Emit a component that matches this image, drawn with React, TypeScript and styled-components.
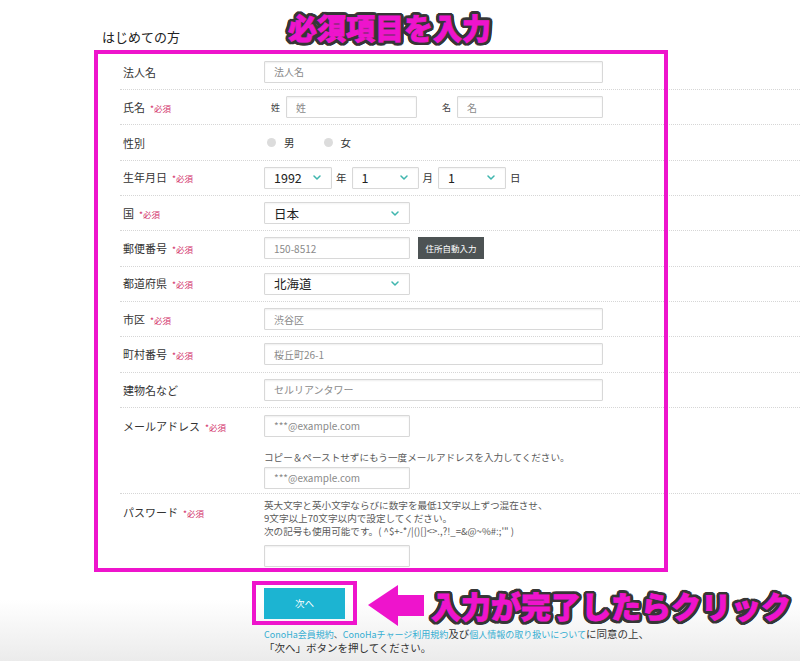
import React from "react";
import styled, { createGlobalStyle } from "styled-components";

const MAGENTA = "#ee14cc";
const TEAL = "#1cb4d2";

const GlobalStyle = createGlobalStyle`
  html, body { margin: 0; padding: 0; background: #ffffff; }
  body { font-family: "Noto Sans CJK JP", "Noto Sans", sans-serif; color: #333; }
  * { box-sizing: border-box; }
`;

const Page = styled.div`
  position: relative;
  width: 800px;
  height: 661px;
  overflow: hidden;
  background: linear-gradient(to bottom, #ffffff 0, #ffffff 600px, #ebebeb 661px);
`;

const Title = styled.h2`
  margin: 0;
  padding: 29px 0 0 102px;
  font-size: 13px;
  line-height: 16px;
  font-weight: 400;
  color: #222;
`;

const Form = styled.div`
  margin: 9.7px 0 0 120px;
  width: 680px;
`;

const Row = styled.div<{ $tall?: boolean; $last?: boolean }>`
  display: grid;
  grid-template-columns: 144px 1fr;
  align-items: ${(p) => (p.$tall ? "start" : "center")};
  height: ${(p) => (p.$tall ? "auto" : "35.33px")};
  padding: ${(p) => (p.$tall ? "7px 0 4px" : "0")};
  border-bottom: ${(p) => (p.$last ? "none" : "1px dotted #d6d6d6")};
`;

const Label = styled.div`
  padding-left: 3px;
  font-size: 11px;
  line-height: 22px;
  color: #333;
  white-space: nowrap;
`;

const Req = styled.span`
  margin-left: 5px;
  font-size: 8.5px;
  color: #d2306a;
`;

const Field = styled.div`
  display: flex;
  align-items: center;
`;

const Stack = styled.div`
  display: flex;
  flex-direction: column;
  align-items: flex-start;
`;

const TextInput = styled.input<{ $w: number }>`
  width: ${(p) => p.$w}px;
  height: 22px;
  padding: 0 9px;
  border: 1px solid #d8d8d8;
  border-radius: 1px;
  box-shadow: inset 0 1px 2px rgba(0, 0, 0, 0.07);
  background: #fff;
  font-family: inherit;
  font-size: 10px;
  color: #555;
  outline: none;
  &::placeholder { color: #8a8a8a; }
`;

const SmallMark = styled.span<{ $ml?: number }>`
  margin-left: ${(p) => p.$ml ?? 0}px;
  margin-right: 6px;
  font-size: 9px;
  color: #444;
`;

const SelectBox = styled.div<{ $w: number }>`
  width: ${(p) => p.$w}px;
  height: 22px;
  display: flex;
  align-items: center;
  justify-content: space-between;
  padding: 0 10px 0 9px;
  border: 1px solid #d8d8d8;
  border-radius: 1px;
  box-shadow: inset 0 1px 2px rgba(0, 0, 0, 0.05);
  background: #fff;
  font-size: 12.5px;
  color: #222;
`;

const Unit = styled.span`
  margin: 0 5px 0 4px;
  font-size: 10.5px;
  color: #333;
`;

const Radio = styled.span<{ $ml?: number }>`
  width: 9px;
  height: 9px;
  border-radius: 50%;
  background: #dcdcdc;
  margin-left: ${(p) => p.$ml ?? 0}px;
  margin-right: 8px;
`;

const RadioText = styled.span`
  font-size: 10.5px;
  color: #333;
`;

const DarkButton = styled.button`
  margin-left: 8px;
  width: 66px;
  height: 22px;
  border: none;
  background: #4d5354;
  color: #fff;
  font-family: inherit;
  font-size: 8.5px;
  padding: 0;
`;

const Note = styled.div<{ $mt?: number }>`
  margin-top: ${(p) => p.$mt ?? 0}px;
  font-size: 9.6px;
  line-height: 13px;
  color: #5a5a5a;
  white-space: nowrap;
`;

const Spacer = styled.div<{ $h: number }>`
  height: ${(p) => p.$h}px;
`;

const Footer = styled.div`
  padding: 17px 0 0 264px;
`;

const NextButton = styled.button`
  display: block;
  width: 81px;
  height: 31px;
  border: none;
  background: ${TEAL};
  color: #fff;
  font-family: inherit;
  font-size: 9.5px;
  padding: 0;
`;

const Terms = styled.p`
  margin: 8px 0 0;
  font-size: 10.5px;
  line-height: 13px;
  color: #333;
  white-space: nowrap;
`;

const TermLink = styled.a`
  color: #35aed2;
  font-size: 9px;
  text-decoration: none;
`;

const Comma = styled.span`
  color: #555;
  font-size: 9px;
`;

/* ---------- annotation overlays ---------- */

const Highlight = styled.div<{ $l: number; $t: number; $w: number; $h: number }>`
  position: absolute;
  left: ${(p) => p.$l}px;
  top: ${(p) => p.$t}px;
  width: ${(p) => p.$w}px;
  height: ${(p) => p.$h}px;
  border: 4px solid ${MAGENTA};
  pointer-events: none;
`;

const outline = (() => {
  const out: string[] = [];
  const r = 3.4;
  for (let a = 0; a < 360; a += 15) {
    const x = (Math.cos((a * Math.PI) / 180) * r).toFixed(2);
    const y = (Math.sin((a * Math.PI) / 180) * r).toFixed(2);
    out.push(`${x}px ${y}px 0 #363636`);
  }
  out.push("0 0 6px rgba(255,255,255,0.9)");
  return out.join(", ");
})();

const Caption = styled.div<{ $l: number; $t: number; $size: number }>`
  position: absolute;
  left: ${(p) => p.$l}px;
  top: ${(p) => p.$t}px;
  font-size: ${(p) => p.$size}px;
  line-height: 1;
  font-weight: 900;
  color: ${MAGENTA};
  letter-spacing: 0;
  white-space: nowrap;
  text-shadow: ${outline};
  -webkit-text-stroke: 0.8px ${MAGENTA};
`;

const ArrowSvg = styled.svg`
  position: absolute;
  left: 368px;
  top: 584px;
`;

const Chevron = () => (
  <svg width="8" height="5" viewBox="0 0 8 5">
    <path d="M1 1 L4 4 L7 1" fill="none" stroke="#3fb6ae" strokeWidth="1.5" strokeLinecap="round" strokeLinejoin="round" />
  </svg>
);

const Select = ({ w, value }: { w: number; value: string }) => (
  <SelectBox $w={w}>
    <span>{value}</span>
    <Chevron />
  </SelectBox>
);

const Required = () => <Req>*必須</Req>;

export default function App() {
  return (
    <>
      <GlobalStyle />
      <Page>
        <Title>はじめての方</Title>
        <Form>
          <Row>
            <Label>法人名</Label>
            <Field><TextInput $w={339} placeholder="法人名" /></Field>
          </Row>
          <Row>
            <Label>氏名<Required /></Label>
            <Field>
              <SmallMark $ml={7}>姓</SmallMark>
              <TextInput $w={131} placeholder="姓" />
              <SmallMark $ml={25}>名</SmallMark>
              <TextInput $w={146} placeholder="名" />
            </Field>
          </Row>
          <Row>
            <Label>性別</Label>
            <Field>
              <Radio $ml={3} />
              <RadioText>男</RadioText>
              <Radio $ml={29} />
              <RadioText>女</RadioText>
            </Field>
          </Row>
          <Row>
            <Label>生年月日<Required /></Label>
            <Field>
              <Select w={68} value="1992" />
              <Unit>年</Unit>
              <Select w={67} value="1" />
              <Unit>月</Unit>
              <Select w={68} value="1" />
              <Unit>日</Unit>
            </Field>
          </Row>
          <Row>
            <Label>国<Required /></Label>
            <Field><Select w={146} value="日本" /></Field>
          </Row>
          <Row>
            <Label>郵便番号<Required /></Label>
            <Field>
              <TextInput $w={146} placeholder="150-8512" />
              <DarkButton>住所自動入力</DarkButton>
            </Field>
          </Row>
          <Row>
            <Label>都道府県<Required /></Label>
            <Field><Select w={146} value="北海道" /></Field>
          </Row>
          <Row>
            <Label>市区<Required /></Label>
            <Field><TextInput $w={339} placeholder="渋谷区" /></Field>
          </Row>
          <Row>
            <Label>町村番号<Required /></Label>
            <Field><TextInput $w={339} placeholder="桜丘町26-1" /></Field>
          </Row>
          <Row>
            <Label>建物名など</Label>
            <Field><TextInput $w={339} placeholder="セルリアンタワー" /></Field>
          </Row>
          <Row $tall>
            <Label>メールアドレス<Required /></Label>
            <Stack>
              <TextInput $w={146} placeholder="***@example.com" />
              <Note $mt={14}>コピー＆ペーストせずにもう一度メールアドレスを入力してください。</Note>
              <Spacer $h={3} />
              <TextInput $w={146} placeholder="***@example.com" />
            </Stack>
          </Row>
          <Row $tall $last>
            <Label>パスワード<Required /></Label>
            <Stack>
              <Note $mt={-1.5}>
                英大文字と英小文字ならびに数字を最低1文字以上ずつ混在させ、<br />
                9文字以上70文字以内で設定してください。<br />
                次の記号も使用可能です。( ^$+-*/|()[]{}&lt;&gt;.,?!_=&amp;@~%#:;'" )
              </Note>
              <Spacer $h={6.5} />
              <TextInput $w={146} type="password" />
            </Stack>
          </Row>
        </Form>
        <Footer>
          <NextButton>次へ</NextButton>
          <Terms>
            <TermLink href="#">ConoHa会員規約</TermLink>
            <Comma>、</Comma>
            <TermLink href="#">ConoHaチャージ利用規約</TermLink>
            及び
            <TermLink href="#">個人情報の取り扱いについて</TermLink>
            に同意の上、
            <br />
            「次へ」ボタンを押してください。
          </Terms>
        </Footer>

        <Highlight $l={94} $t={50} $w={574} $h={522} />
        <Highlight $l={252} $t={581} $w={105} $h={44} />
        <ArrowSvg width="60" height="44" viewBox="0 0 60 44">
          <path d="M0 21 L30 1 L30 11 L56 11 L56 32 L30 32 L30 42 Z" fill={MAGENTA} />
        </ArrowSvg>
        <Caption $l={288} $t={13} $size={29}>必須項目を入力</Caption>
        <Caption $l={431} $t={590} $size={30}>入力が完了したらクリック</Caption>
      </Page>
    </>
  );
}
